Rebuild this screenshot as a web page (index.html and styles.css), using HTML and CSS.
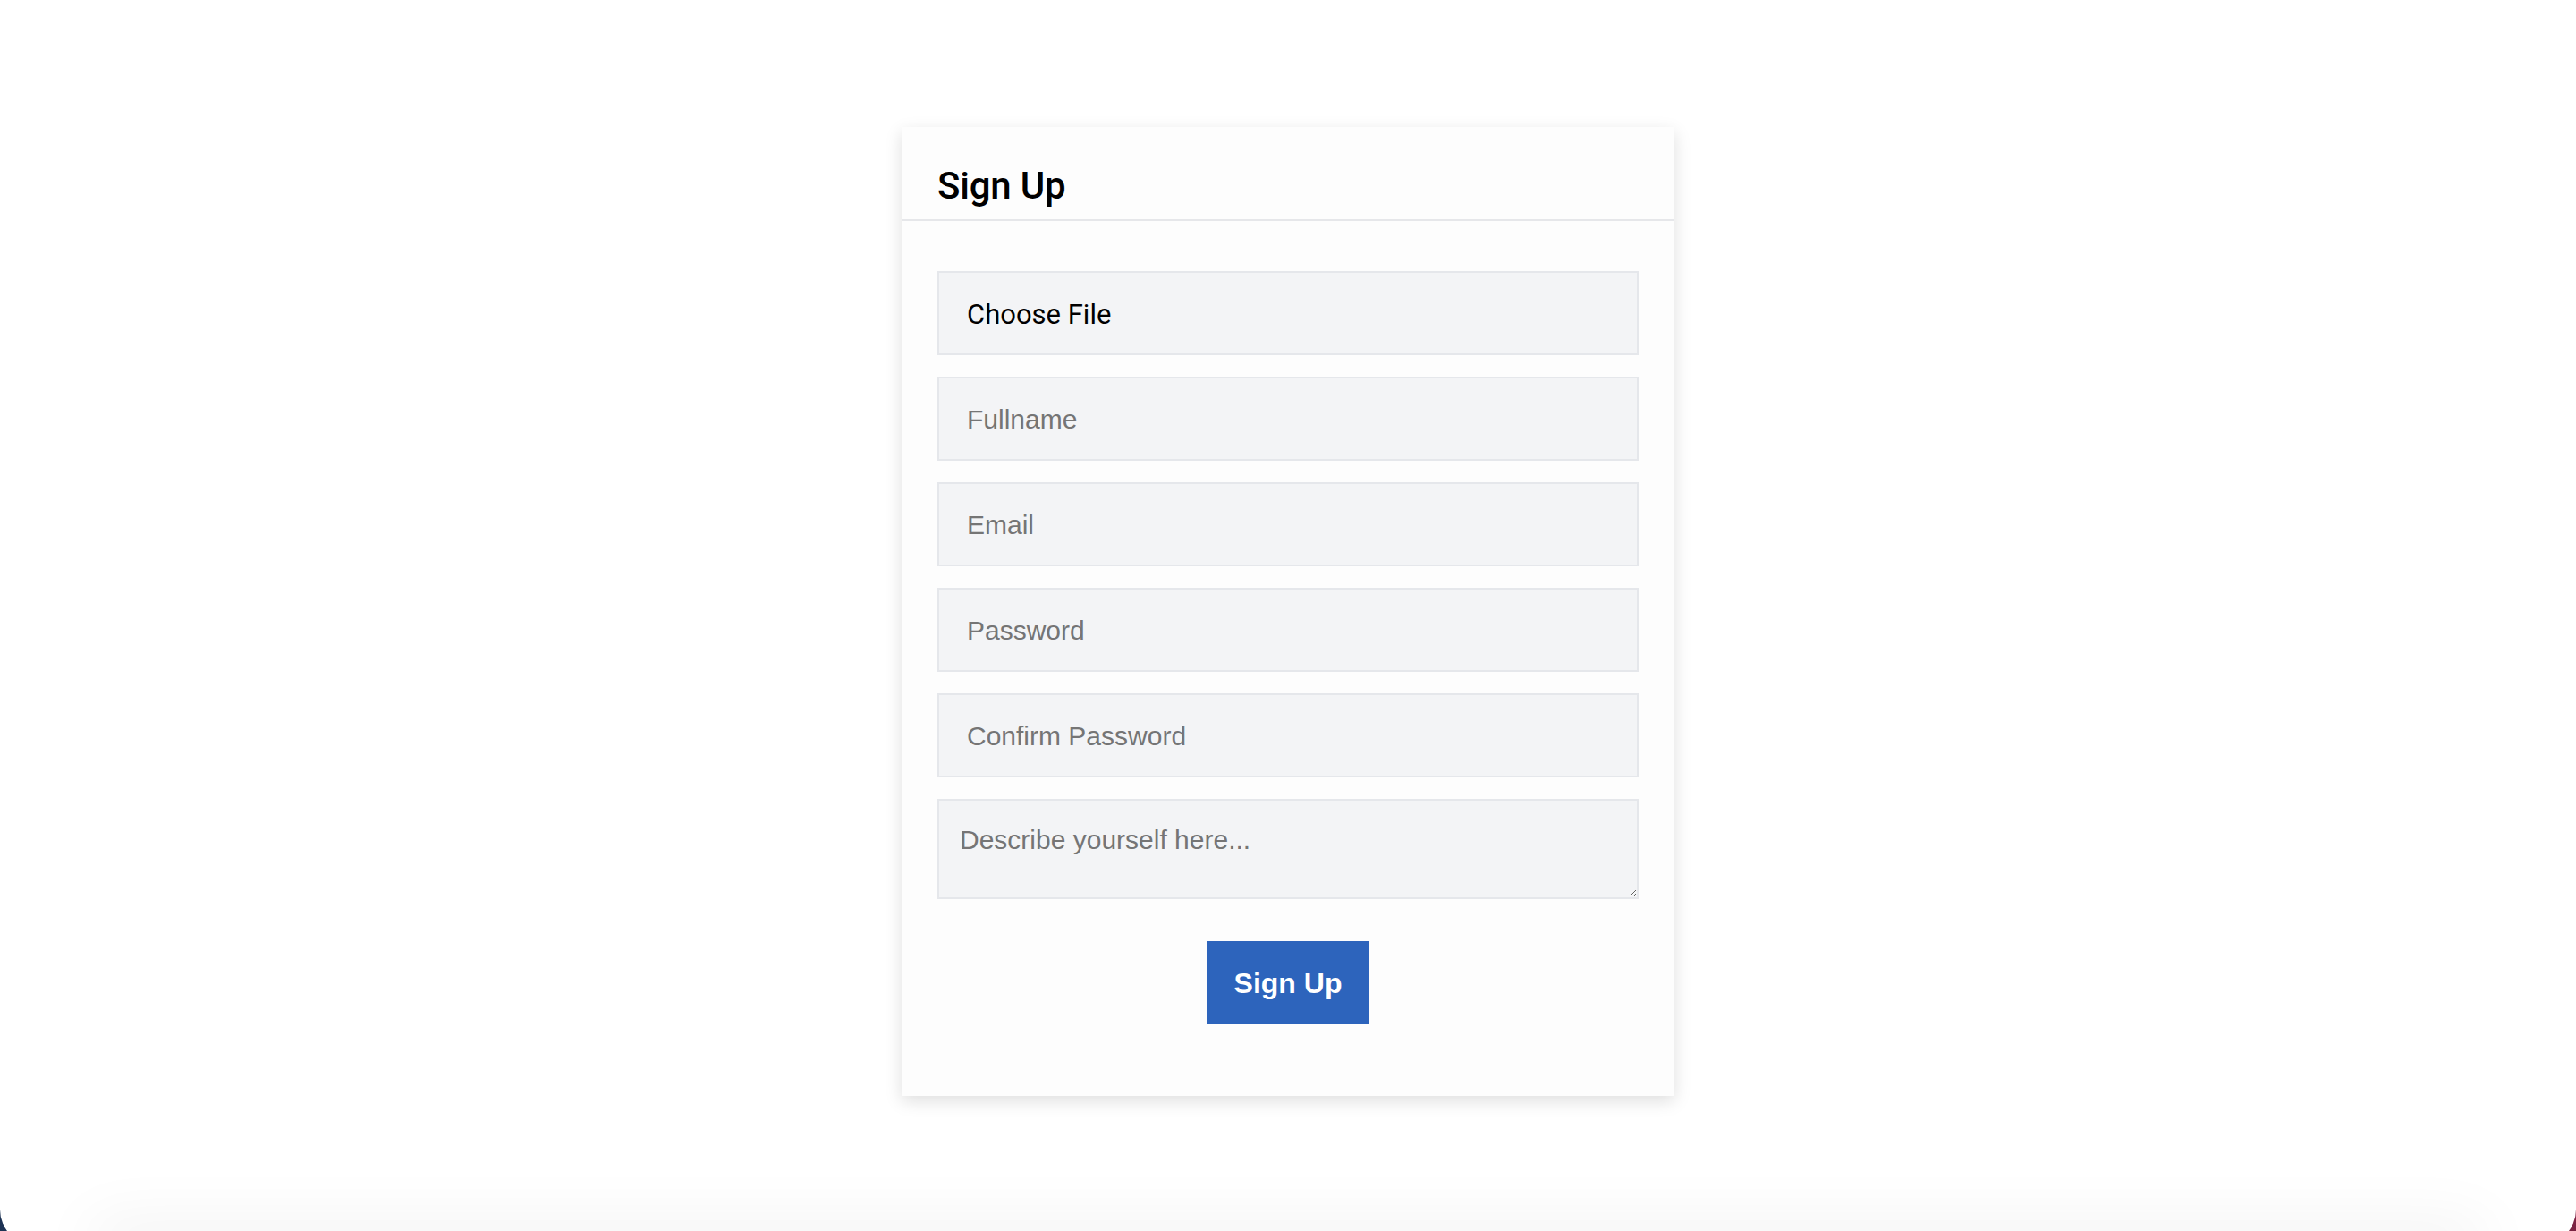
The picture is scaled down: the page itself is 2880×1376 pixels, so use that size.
FILE: index.html
```html
<!DOCTYPE html>
<html lang="en">
<head>
<meta charset="utf-8">
<title>Sign Up</title>
<link rel="stylesheet" href="styles.css">
</head>
<body>
<div class="page">
  <main class="stage">
    <form class="card">
      <div class="card-header">
        <h1 class="card-title">Sign Up</h1>
      </div>
      <div class="card-body">
        <label class="file-field"><input type="file" class="file-input">Choose File</label>
        <input class="field" type="text" placeholder="Fullname">
        <input class="field" type="email" placeholder="Email">
        <input class="field" type="password" placeholder="Password">
        <input class="field" type="password" placeholder="Confirm Password">
        <textarea class="area" placeholder="Describe yourself here..."></textarea>
        <div class="actions">
          <button class="submit" type="button">Sign Up</button>
        </div>
      </div>
    </form>
  </main>
  <div class="footer-edge"></div>
</div>
</body>
</html>
```
FILE: styles.css
```css
html, body {
  margin: 0;
  padding: 0;
}
body {
  overflow: hidden;
  height: 1376px;
  background: linear-gradient(to right, #1d3354, #4a2748 50%, #7b2343);
  font-family: "Liberation Sans", Arial, sans-serif;
}
.page {
  background: #ffffff;
  height: 1392px;
  border-radius: 0 0 40px 40px;
  display: flex;
  flex-direction: column;
}
.stage {
  display: flex;
  justify-content: center;
  padding-top: 142px;
}
.card {
  width: 864px;
  background: #fdfdfd;
  box-shadow: 0 6px 18px rgba(0, 0, 0, 0.13);
  box-sizing: border-box;
}
.card-header {
  padding: 45px 40px 16px;
  border-bottom: 2px solid #e6e7ea;
}
.card-title {
  margin: 0;
  font-family: Roboto, "Liberation Sans", sans-serif;
  font-weight: 500;
  font-size: 42px;
  line-height: 42px;
  color: #000;
  letter-spacing: -0.2px;
}
.card-body {
  padding: 56px 40px 80px;
  display: flex;
  flex-direction: column;
  gap: 24px;
}
.file-field,
.field,
.area {
  box-sizing: border-box;
  width: 100%;
  background: #f3f4f6;
  border: 2px solid #e5e7eb;
  border-radius: 0;
  margin: 0;
  outline: none;
}
.file-field {
  display: flex;
  align-items: center;
  height: 94px;
  padding: 2px 31px 0;
  font-family: Roboto, "Liberation Sans", sans-serif;
  font-size: 31px;
  color: #000;
  cursor: pointer;
}
.file-input {
  display: none;
}
.field {
  height: 94px;
  padding: 2px 31px 0;
  font-family: "Liberation Sans", Arial, sans-serif;
  font-size: 30px;
  color: #111;
}
.field::placeholder,
.area::placeholder {
  color: #757575;
  opacity: 1;
}
.area {
  display: block;
  height: 112px;
  padding: 27px 23px;
  font-family: "Liberation Sans", Arial, sans-serif;
  font-size: 30px;
  line-height: normal;
  resize: vertical;
}
.actions {
  display: flex;
  justify-content: center;
  padding-top: 23px;
}
.submit {
  height: 93px;
  padding: 2px 31px 0;
  background: #2d64bc;
  color: #ffffff;
  border: none;
  border-radius: 0;
  font-family: "Liberation Sans", Arial, sans-serif;
  font-weight: 700;
  font-size: 32px;
  cursor: pointer;
}
.footer-edge {
  margin: auto 100px 0;
  height: 12px;
  border-radius: 60px 60px 0 0;
  background: #e6e6e6;
  box-shadow: 0 0 70px rgba(0, 0, 0, 0.2);
}
```
